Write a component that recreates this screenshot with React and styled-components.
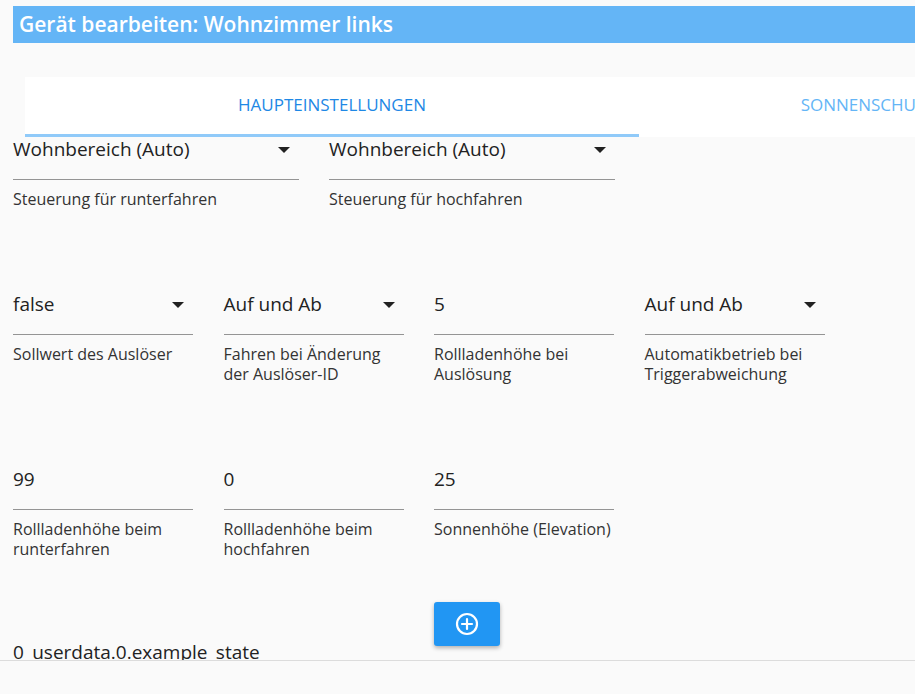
import styled, {createGlobalStyle} from 'styled-components';

const GlobalStyle = createGlobalStyle`
  html, body {
    margin: 0;
    padding: 0;
    background: #fafafa;
    overflow: hidden;
  }
  body {
    font-family: "Open Sans", "Noto Sans", sans-serif;
    color: #212121;
  }
`;

const Page = styled.div`
  width: 915px;
  height: 694px;
  display: flex;
  flex-direction: column;
  overflow: hidden;
  background: #fafafa;
`;

const TitleBar = styled.div`
  margin: 6px 0 0 13px;
  height: 37px;
  width: 960px;
  flex-shrink: 0;
  background: #64b5f6;
  color: #fff;
  font-size: 21px;
  font-weight: 600;
  line-height: 37px;
  padding-left: 6px;
  box-sizing: border-box;
  white-space: nowrap;
`;

const Tabs = styled.div`
  margin: 34px 0 0 25px;
  height: 60px;
  flex-shrink: 0;
  display: flex;
  background: #fff;
  width: 1228px;
`;

const Tab = styled.div`
  width: 614px;
  flex-shrink: 0;
  box-sizing: border-box;
  display: flex;
  align-items: center;
  justify-content: center;
  padding-bottom: 3px;
  font-size: 17px;
  color: ${p => (p.$active ? '#1e88e5' : '#64b5f6')};
  border-bottom: 3px solid ${p => (p.$active ? '#90caf9' : 'transparent')};
  white-space: nowrap;
`;

const Scroll = styled.div`
  height: 524px;
  flex-shrink: 0;
  overflow: hidden;
  border-bottom: 1px solid #dcdcdc;
  padding: 2px 0 0 13px;
  box-sizing: border-box;
`;

const Row = styled.div`
  display: grid;
  grid-template-columns: repeat(${p => p.$cols}, ${p => p.$width}px);
  column-gap: ${p => p.$gap}px;
  margin-bottom: ${p => p.$after}px;
`;

const Field = styled.div`
  display: flex;
  flex-direction: column;
`;

const ValueRow = styled.div`
  height: 40px;
  display: flex;
  align-items: flex-start;
  justify-content: space-between;
  border-bottom: 1px solid #949494;
  font-size: 19px;
  line-height: 21px;
  color: #222;
`;

const Arrow = styled.svg`
  margin: 8px 9px 0 0;
  flex-shrink: 0;
`;

const Label = styled.div`
  margin-top: 9px;
  font-size: 16px;
  line-height: 20px;
  color: #333;
  white-space: nowrap;
`;

const AddButton = styled.button`
  grid-column: 3;
  width: 66px;
  height: 44px;
  border: none;
  border-radius: 3px;
  background: #2196f3;
  box-shadow: 0 2px 4px rgba(0, 0, 0, 0.3);
  display: flex;
  align-items: center;
  justify-content: center;
  padding: 0;
`;

const StateText = styled.div`
  margin-top: -6px;
  font-size: 19px;
  line-height: 24px;
  color: #222;
  white-space: nowrap;
`;

const Footer = styled.div`
  flex: 1;
`;

function DropArrow() {
  return (
    <Arrow width="12" height="6" viewBox="0 0 12 6">
      <path d="M0 0h12L6 6z" fill="#212121" />
    </Arrow>
  );
}

function FieldBox({value, label, select}) {
  return (
    <Field>
      <ValueRow>
        <span>{value}</span>
        {select && <DropArrow />}
      </ValueRow>
      <Label>{label}</Label>
    </Field>
  );
}

const triggerFields = [
  {value: 'false', label: 'Sollwert des Auslöser', select: true},
  {value: 'Auf und Ab', label: <>Fahren bei Änderung<br />der Auslöser-ID</>, select: true},
  {value: '5', label: <>Rollladenhöhe bei<br />Auslösung</>},
  {value: 'Auf und Ab', label: <>Automatikbetrieb bei<br />Triggerabweichung</>, select: true},
];

const heightFields = [
  {value: '99', label: <>Rollladenhöhe beim<br />runterfahren</>},
  {value: '0', label: <>Rollladenhöhe beim<br />hochfahren</>},
  {value: '25', label: 'Sonnenhöhe (Elevation)'},
];

export default function App() {
  return (
    <Page>
      <GlobalStyle />
      <TitleBar>Gerät bearbeiten: Wohnzimmer links</TitleBar>
      <Tabs>
        <Tab $active>HAUPTEINSTELLUNGEN</Tab>
        <Tab>SONNENSCHUTZ UND HITZESCHUTZ</Tab>
      </Tabs>
      <Scroll>
        <Row $cols={2} $width={286} $gap={30} $after={85}>
          <FieldBox value="Wohnbereich (Auto)" label="Steuerung für runterfahren" select />
          <FieldBox value="Wohnbereich (Auto)" label="Steuerung für hochfahren" select />
        </Row>
        <Row $cols={4} $width={180} $gap={30.5} $after={85}>
          {triggerFields.map((f, i) => <FieldBox key={i} {...f} />)}
        </Row>
        <Row $cols={4} $width={180} $gap={30.5} $after={43}>
          {heightFields.map((f, i) => <FieldBox key={i} {...f} />)}
        </Row>
        <Row $cols={4} $width={180} $gap={30.5} $after={0}>
          <AddButton>
            <svg width="24" height="24" viewBox="0 0 24 24" fill="none" stroke="#fff" strokeWidth="2.2" strokeLinecap="round">
              <circle cx="12" cy="12" r="10" />
              <path d="M12 7v10M7 12h10" />
            </svg>
          </AddButton>
        </Row>
        <StateText>0_userdata.0.example_state</StateText>
      </Scroll>
      <Footer />
    </Page>
  );
}
